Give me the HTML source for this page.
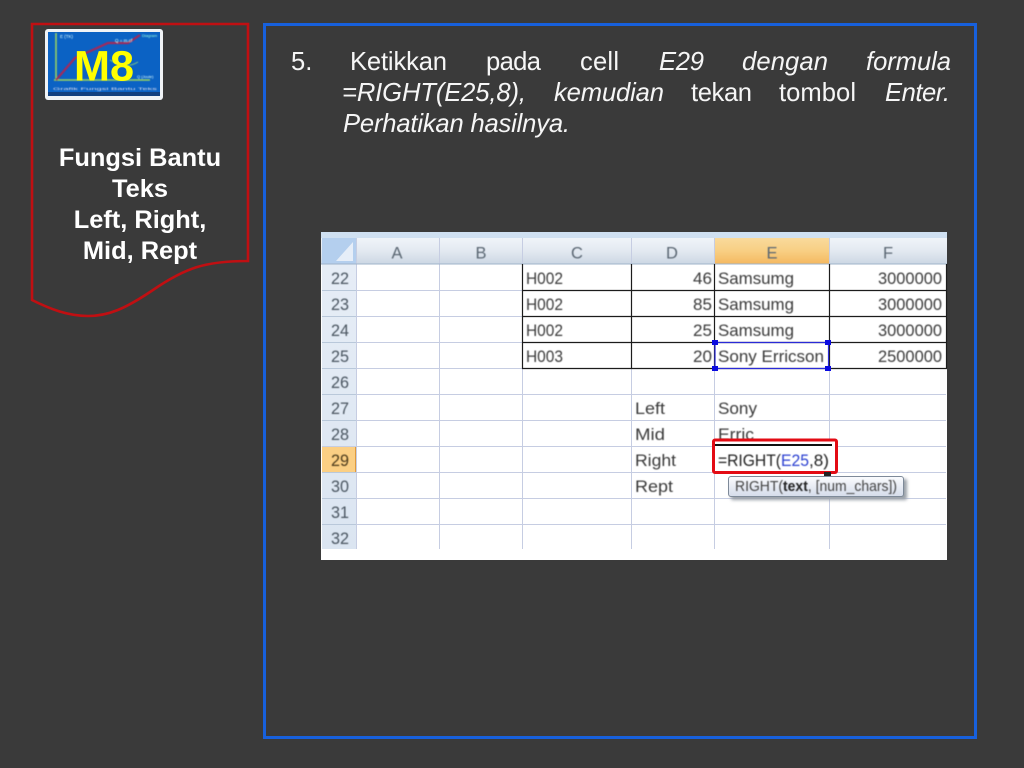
<!DOCTYPE html>
<html>
<head>
<meta charset="utf-8">
<style>
html,body{margin:0;padding:0;background:#3a3a3a;width:1024px;height:768px;overflow:hidden}
svg{display:block}
text{font-family:"Liberation Sans",sans-serif}
.m{font-size:25.6px;fill:#f6f6f6}
.i{font-style:italic}
.h{font-size:25.4px;font-weight:700;fill:#fff;text-anchor:middle}
.s{font-size:16.6px;fill:#3a3a3a}
.r{font-size:16.6px;fill:#4a5560}
.c{font-size:16.5px;fill:#5a6672;text-anchor:middle}
</style>
</head>
<body>
<svg width="1024" height="768" viewBox="0 0 1024 768" xmlns="http://www.w3.org/2000/svg">
<defs>
<linearGradient id="hd" x1="0" y1="0" x2="0" y2="1"><stop offset="0" stop-color="#f0f4f9"/><stop offset=".5" stop-color="#e3e9f1"/><stop offset="1" stop-color="#ccd7e4"/></linearGradient>
<linearGradient id="or" x1="0" y1="0" x2="0" y2="1"><stop offset="0" stop-color="#f9da9c"/><stop offset=".5" stop-color="#f8cf83"/><stop offset="1" stop-color="#f4b860"/></linearGradient>
<linearGradient id="rw" x1="0" y1="0" x2="0" y2="1"><stop offset="0" stop-color="#e6edf6"/><stop offset="1" stop-color="#dbe5f1"/></linearGradient>
<linearGradient id="tt" x1="0" y1="0" x2="0" y2="1"><stop offset="0" stop-color="#fbfcfe"/><stop offset="1" stop-color="#d5dcea"/></linearGradient>
<filter id="b" x="-5%" y="-5%" width="110%" height="110%"><feGaussianBlur stdDeviation="0.45"/></filter>
<filter id="t" x="-5%" y="-5%" width="110%" height="110%"><feGaussianBlur stdDeviation="0.25"/></filter>
<filter id="sh" x="-10%" y="-20%" width="120%" height="150%"><feGaussianBlur stdDeviation="1.5"/></filter>
</defs>

<rect width="1024" height="768" fill="#3a3a3a"/>

<!-- red document shape -->
<path d="M32 24H248V261C205 261 185 268 153 290C125 309 108 316 88 316C68 316 50 309 32 300Z" fill="none" stroke="#c00f12" stroke-width="2.6"/>

<!-- logo -->
<rect x="45" y="29" width="118" height="71" rx="3" fill="#f0f3f6"/>
<rect x="48" y="32" width="112" height="63" fill="#0b62c4"/>
<rect x="48" y="92" width="112" height="4" fill="#12407f"/>
<g filter="url(#b)">
<path d="M56 33V80M54 80H150" stroke="#9ed45f" stroke-width="1.500" fill="none"/>
<path d="M56 80L75 58L108 43H128L140 35" stroke="#a02a5c" stroke-width="2.200" fill="none"/>
<path d="M110 60Q125 70 138 62" stroke="#7fc87f" stroke-width="1" fill="none"/>
<text x="60" y="38" font-size="4.500" fill="#dff">E (TK)</text>
<text x="115" y="42" font-size="4.500" fill="#dff">Q = m.cf</text>
<text x="142" y="37" font-size="4" fill="#9fd">Diagram</text>
<text x="137" y="78" font-size="4" fill="#dff">Q (Joule)</text>
<text x="53" y="90" font-size="4" fill="#dde" textLength="104" lengthAdjust="spacingAndGlyphs">Grafik Fungsi Bantu Teks</text>
</g>
<text x="74" y="80.500" font-size="43" font-weight="700" fill="#ffff00" textLength="60" lengthAdjust="spacingAndGlyphs">M8</text>

<!-- left title -->
<g filter="url(#t)">
<text class="h" x="140" y="166">Fungsi Bantu</text>
<text class="h" x="140" y="197">Teks</text>
<text class="h" x="140" y="228">Left, Right,</text>
<text class="h" x="140" y="259">Mid, Rept</text>
</g>

<!-- blue content frame -->
<rect x="264.500" y="24.500" width="711" height="713" fill="none" stroke="#1760dc" stroke-width="3"/>

<!-- main text -->
<g filter="url(#t)">
<text class="m" x="291" y="70">5.</text>
<text class="m" x="350" y="70" textLength="97">Ketikkan</text>
<text class="m" x="486" y="70" textLength="55">pada</text>
<text class="m" x="580" y="70" textLength="39">cell</text>
<text class="m i" x="659" y="70" textLength="45">E29</text>
<text class="m i" x="742" y="70" textLength="86">dengan</text>
<text class="m i" x="866" y="70" textLength="85">formula</text>
<text class="m i" x="342" y="101" textLength="184">=RIGHT(E25,8),</text>
<text class="m i" x="554" y="101" textLength="110">kemudian</text>
<text class="m" x="691" y="101" textLength="61">tekan</text>
<text class="m" x="779" y="101" textLength="77">tombol</text>
<text class="m i" x="885" y="101" textLength="65">Enter.</text>
<text class="m i" x="343" y="132" textLength="227">Perhatikan hasilnya.</text>
</g>

<!-- spreadsheet -->
<rect x="321" y="232" width="626" height="328" fill="#fff"/>
<rect x="321" y="232" width="626" height="6" fill="#cfe0f1"/>
<rect x="321" y="238" width="626" height="26" fill="url(#hd)"/>
<rect x="322" y="238" width="34" height="26" fill="#b4cfee"/>
<path d="M353 242V261H336Z" fill="#e6eef8"/>
<rect x="714" y="238" width="115" height="26" fill="url(#or)"/>
<rect x="322" y="264" width="34" height="285" fill="url(#rw)"/>
<rect x="322" y="446" width="34" height="26" fill="#fbcf84"/>
<path d="M322 446.500H356M322 472.500H356M355.500 446V472" stroke="#e09a3c" fill="none"/>

<!-- grid lines -->
<g stroke="#c6cde2" stroke-width="1" fill="none">
<path d="M356.500 238V549M439.500 238V549M522.500 238V549M631.500 238V549M714.500 238V549M829.500 238V549"/>
<path d="M322 290.500H946M322 316.500H946M322 342.500H946M322 368.500H946M322 394.500H946M322 420.500H946M322 446.500H946M322 472.500H946M322 498.500H946M322 524.500H946"/>
</g>
<path d="M321 264H947" stroke="#9fb3c9" fill="none"/>
<path d="M322 394.500H356M322 420.500H356M322 472.500H356M322 498.500H356M322 524.500H356M322 290.500H356M322 316.500H356M322 342.500H356M322 368.500H356" stroke="#b9c8da" fill="none"/>

<!-- table borders -->
<g stroke="#1c1c1c" stroke-width="1.200" fill="none">
<path d="M522.500 264V368.500M631.500 264V368.500M714.500 264V368.500M829.500 264V368.500M946.500 264V368.500"/>
<path d="M522 290.500H947M522 316.500H947M522 342.500H947M522 368.500H947"/>
</g>

<g filter="url(#b)">
<text class="c" x="397" y="258.500">A</text>
<text class="c" x="481" y="258.500">B</text>
<text class="c" x="577" y="258.500">C</text>
<text class="c" x="672" y="258.500">D</text>
<text class="c" x="772" y="258.500">E</text>
<text class="c" x="888" y="258.500">F</text>

<text class="r" x="331" y="284" textLength="18" lengthAdjust="spacingAndGlyphs">22</text>
<text class="r" x="331" y="310" textLength="18" lengthAdjust="spacingAndGlyphs">23</text>
<text class="r" x="331" y="336" textLength="18" lengthAdjust="spacingAndGlyphs">24</text>
<text class="r" x="331" y="362" textLength="18" lengthAdjust="spacingAndGlyphs">25</text>
<text class="r" x="331" y="388" textLength="18" lengthAdjust="spacingAndGlyphs">26</text>
<text class="r" x="331" y="414" textLength="18" lengthAdjust="spacingAndGlyphs">27</text>
<text class="r" x="331" y="440" textLength="18" lengthAdjust="spacingAndGlyphs">28</text>
<text class="r" x="331" y="466" textLength="18" lengthAdjust="spacingAndGlyphs" style="fill:#4b3a1c">29</text>
<text class="r" x="331" y="492" textLength="18" lengthAdjust="spacingAndGlyphs">30</text>
<text class="r" x="331" y="518" textLength="18" lengthAdjust="spacingAndGlyphs">31</text>
<text class="r" x="331" y="544" textLength="18" lengthAdjust="spacingAndGlyphs">32</text>

<text class="s" x="526" y="284" textLength="37" lengthAdjust="spacingAndGlyphs">H002</text>
<text class="s" x="526" y="310" textLength="37" lengthAdjust="spacingAndGlyphs">H002</text>
<text class="s" x="526" y="336" textLength="37" lengthAdjust="spacingAndGlyphs">H002</text>
<text class="s" x="526" y="362" textLength="37" lengthAdjust="spacingAndGlyphs">H003</text>

<text class="s" x="693" y="284" textLength="19" lengthAdjust="spacingAndGlyphs">46</text>
<text class="s" x="693" y="310" textLength="19" lengthAdjust="spacingAndGlyphs">85</text>
<text class="s" x="693" y="336" textLength="19" lengthAdjust="spacingAndGlyphs">25</text>
<text class="s" x="693" y="362" textLength="19" lengthAdjust="spacingAndGlyphs">20</text>

<text class="s" x="718" y="284" textLength="76" lengthAdjust="spacingAndGlyphs">Samsumg</text>
<text class="s" x="718" y="310" textLength="76" lengthAdjust="spacingAndGlyphs">Samsumg</text>
<text class="s" x="718" y="336" textLength="76" lengthAdjust="spacingAndGlyphs">Samsumg</text>
<text class="s" x="718" y="362" textLength="106" lengthAdjust="spacingAndGlyphs">Sony Erricson</text>

<text class="s" x="878" y="284" textLength="64" lengthAdjust="spacingAndGlyphs">3000000</text>
<text class="s" x="878" y="310" textLength="64" lengthAdjust="spacingAndGlyphs">3000000</text>
<text class="s" x="878" y="336" textLength="64" lengthAdjust="spacingAndGlyphs">3000000</text>
<text class="s" x="878" y="362" textLength="64" lengthAdjust="spacingAndGlyphs">2500000</text>

<text class="s" x="635" y="414" textLength="30" lengthAdjust="spacingAndGlyphs">Left</text>
<text class="s" x="635" y="440" textLength="30" lengthAdjust="spacingAndGlyphs">Mid</text>
<text class="s" x="635" y="466" textLength="41" lengthAdjust="spacingAndGlyphs">Right</text>
<text class="s" x="635" y="492" textLength="38" lengthAdjust="spacingAndGlyphs">Rept</text>
<text class="s" x="718" y="414" textLength="39" lengthAdjust="spacingAndGlyphs">Sony</text>
<text class="s" x="718" y="440" textLength="36" lengthAdjust="spacingAndGlyphs">Erric</text>
</g>

<!-- selection E25 -->
<rect x="715" y="342.500" width="113.500" height="26" fill="none" stroke="#2a2ad8" stroke-width="1.200"/>
<g fill="#0a0ae0">
<rect x="712" y="340" width="6" height="5"/>
<rect x="825" y="340" width="6" height="5"/>
<rect x="712" y="366" width="6" height="5"/>
<rect x="825" y="366" width="6" height="5"/>
</g>

<!-- editing cell -->
<rect x="714" y="441" width="122" height="31" fill="#fff"/>
<rect x="715" y="444" width="117" height="2" fill="#111"/>
<rect x="713.500" y="440" width="123" height="32.500" rx="1.500" fill="none" stroke="#e30b14" stroke-width="3"/>
<g filter="url(#b)">
<text x="718" y="466" font-size="17" fill="#222" textLength="63" lengthAdjust="spacingAndGlyphs">=RIGHT(</text>
<text x="781" y="466" font-size="17" fill="#2a3fd0" textLength="28" lengthAdjust="spacingAndGlyphs">E25</text>
<text x="809" y="466" font-size="17" fill="#222" textLength="20" lengthAdjust="spacingAndGlyphs">,8)</text>
</g>

<!-- tooltip -->
<rect x="824" y="472" width="7" height="5" fill="#222"/>
<rect x="731" y="479" width="176" height="21" rx="2" fill="#9aa0a8" filter="url(#sh)"/>
<rect x="728.500" y="476.500" width="175" height="20" rx="2.500" fill="url(#tt)" stroke="#7e8a99"/>
<g filter="url(#b)">
<text x="735" y="491" font-size="15" fill="#444" textLength="162" lengthAdjust="spacingAndGlyphs">RIGHT(<tspan font-weight="700" fill="#222">text</tspan>, [num_chars])</text>
</g>
</svg>
</body>
</html>
